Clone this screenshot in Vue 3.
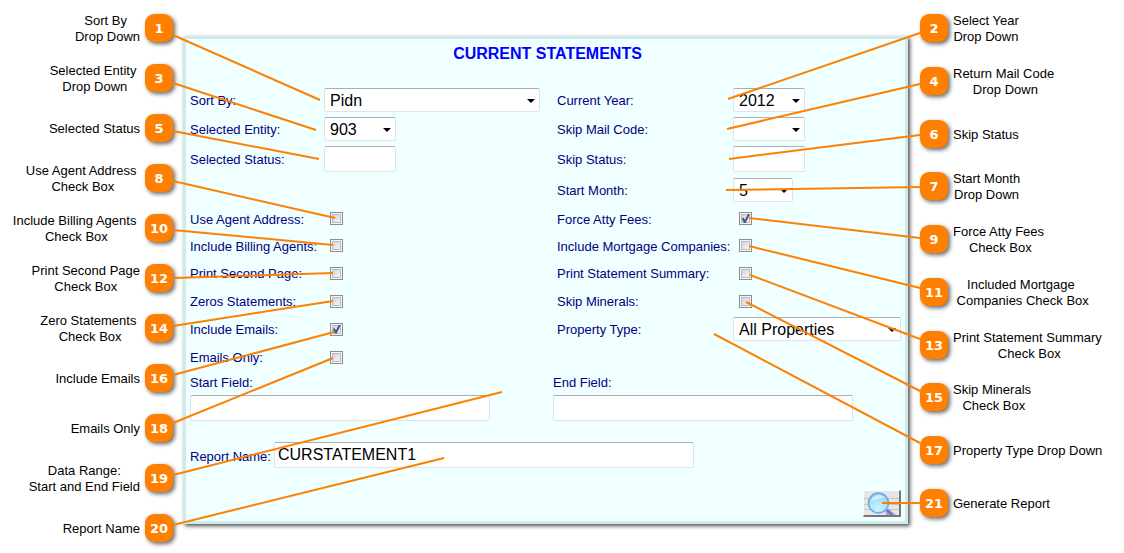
<script setup>
import { reactive } from 'vue'

const leftCallouts = [
  { n: 1, lines: ['Sort By\u00a0', 'Drop Down'] },
  { n: 3, lines: ['Selected Entity\u00a0', 'Drop Down'] },
  { n: 5, lines: ['Selected Status'] },
  { n: 8, lines: ['Use Agent Address\u00a0', 'Check Box'] },
  { n: 10, lines: ['Include Billing Agents\u00a0', 'Check Box'] },
  { n: 12, lines: ['Print Second Page', 'Check Box'] },
  { n: 14, lines: ['Zero Statements\u00a0', 'Check Box'] },
  { n: 16, lines: ['Include Emails'] },
  { n: 18, lines: ['Emails Only'] },
  { n: 19, lines: ['Data Range:', 'Start and End Field'] },
  { n: 20, lines: ['Report Name'] },
]

const rightCallouts = [
  { n: 2, lines: ['Select Year', 'Drop Down'] },
  { n: 4, lines: ['Return Mail Code', '\u00a0Drop Down'] },
  { n: 6, lines: ['Skip Status'] },
  { n: 7, lines: ['Start Month', 'Drop Down'] },
  { n: 9, lines: ['Force Atty Fees', '\u00a0Check Box'] },
  { n: 11, lines: ['Included Mortgage', '\u00a0Companies Check Box'] },
  { n: 13, lines: ['Print Statement Summary', '\u00a0Check Box'] },
  { n: 15, lines: ['Skip Minerals', '\u00a0Check Box'] },
  { n: 17, lines: ['Property Type Drop Down'] },
  { n: 21, lines: ['Generate Report'] },
]

// Leader lines: x1, y1 at the badge, x2, y2 at the field.
const leftLeaders = [
  [173, 35, 320, 100],
  [173, 83, 316, 130],
  [173, 131, 319, 159],
  [173, 181, 335, 218],
  [173, 230, 333, 245],
  [173, 278, 333, 273],
  [173, 326, 333, 301],
  [173, 375, 334, 332],
  [173, 423, 333, 358],
  [173, 475, 502, 392],
  [173, 525, 444, 458],
]

const rightLeaders = [
  [220, 33, 28, 99],
  [220, 84, 27, 129],
  [220, 135, 29, 159],
  [220, 187, 26, 190],
  [220, 238, 49, 218],
  [220, 288, 49, 246],
  [220, 339, 50, 275],
  [220, 391, 46, 302],
  [220, 443, 14, 334],
  [220, 503, 182, 503],
]

const fields = reactive([
  { id: 'sort', side: 'a', row: 1, label: 'Sort By:', type: 'select', size: 'wide', value: 'Pidn' },
  { id: 'year', side: 'b', row: 1, label: 'Current Year:', type: 'select', size: 'short', value: '2012' },
  { id: 'entity', side: 'a', row: 2, label: 'Selected Entity:', type: 'select', size: 'short', value: '903' },
  { id: 'mail', side: 'b', row: 2, label: 'Skip Mail Code:', type: 'select', size: 'short', value: '' },
  { id: 'status', side: 'a', row: 3, label: 'Selected Status:', type: 'text', size: 'short', value: '' },
  { id: 'skip', side: 'b', row: 3, label: 'Skip Status:', type: 'text', size: 'short', value: '' },
  { id: 'month', side: 'b', row: 4, label: 'Start Month:', type: 'select', size: 'tiny', value: '5' },
  { id: 'agent', side: 'a', row: 5, label: 'Use Agent Address:', type: 'check', value: false },
  { id: 'atty', side: 'b', row: 5, label: 'Force Atty Fees:', type: 'check', value: true },
  { id: 'billing', side: 'a', row: 6, label: 'Include Billing Agents:', type: 'check', value: false },
  { id: 'mortgage', side: 'b', row: 6, label: 'Include Mortgage Companies:', type: 'check', value: false },
  { id: 'second', side: 'a', row: 7, label: 'Print Second Page:', type: 'check', value: false },
  { id: 'summary', side: 'b', row: 7, label: 'Print Statement Summary:', type: 'check', value: false },
  { id: 'zeros', side: 'a', row: 8, label: 'Zeros Statements:', type: 'check', value: false },
  { id: 'minerals', side: 'b', row: 8, label: 'Skip Minerals:', type: 'check', value: false },
  { id: 'emails', side: 'a', row: 9, label: 'Include Emails:', type: 'check', value: true },
  { id: 'property', side: 'b', row: 9, label: 'Property Type:', type: 'select', size: 'full', value: 'All Properties' },
  { id: 'only', side: 'a', row: 10, label: 'Emails Only:', type: 'check', value: false },
])

const range = reactive({ start: '', end: '', report: 'CURSTATEMENT1' })
</script>

<template>
  <main class="stage">
    <ul class="callouts left">
      <li v-for="c in leftCallouts" :key="c.n">
        <span class="caption"><span v-for="l in c.lines" :key="l">{{ l }}</span></span>
        <b class="badge">{{ c.n }}</b>
      </li>
    </ul>

    <form class="panel" @submit.prevent>
      <h1>CURRENT STATEMENTS</h1>

      <div class="fields">
        <template v-for="f in fields" :key="f.id">
          <label :for="f.id" :class="['name', f.side]" :style="{ gridRow: f.row }">{{ f.label }}</label>
          <div :class="['control', f.side]" :style="{ gridRow: f.row }">
            <span v-if="f.type === 'select'" :class="['drop', f.size]">
              <select :id="f.id" v-model="f.value">
                <option :value="f.value">{{ f.value }}</option>
              </select>
              <svg class="arrow" viewBox="0 0 8 4" aria-hidden="true"><path d="M0 0h8L4 4z" /></svg>
            </span>
            <input v-else-if="f.type === 'text'" :id="f.id" v-model="f.value" type="text" :class="['box', f.size]">
            <input v-else :id="f.id" v-model="f.value" type="checkbox" class="tick">
          </div>
        </template>
      </div>

      <div class="range">
        <div class="stack">
          <label for="start">Start Field:</label>
          <input id="start" v-model="range.start" type="text" class="box long">
        </div>
        <div class="stack">
          <label for="end">End Field:</label>
          <input id="end" v-model="range.end" type="text" class="box long">
        </div>
      </div>

      <div class="report">
        <label for="report">Report Name:</label>
        <input id="report" v-model="range.report" type="text" class="box report-box">
      </div>

      <button type="submit" class="go" aria-label="Generate Report">
        <svg viewBox="0 0 35 24" aria-hidden="true">
          <defs>
            <radialGradient id="lens" cx="0.45" cy="0.75" r="0.75">
              <stop offset="0" stop-color="#c9f6ff" />
              <stop offset="0.6" stop-color="#a9e0f8" />
              <stop offset="1" stop-color="#8cc6f2" />
            </radialGradient>
          </defs>
          <path d="M0 0h35v24H0z" fill="#e6e6e6" />
          <path d="M0 7.500h35M0 13.500h35M0 18.500h35" stroke="#c6c6c6" />
          <path d="M21 19l4-1 7 6H22z" fill="#a79be0" />
          <path d="M23 19l5 5" stroke="#6a5ab4" stroke-width="1.500" />
          <circle cx="14.500" cy="12" r="10" fill="url(#lens)" stroke="#68abe2" stroke-width="1.500" />
          <path d="M7 10a8 8 0 0 1 14-3q-7 0-14 3z" fill="#e6f8ff" opacity="0.7" />
        </svg>
      </button>
    </form>

    <ul class="callouts right">
      <li v-for="c in rightCallouts" :key="c.n">
        <b class="badge">{{ c.n }}</b>
        <span class="caption"><span v-for="l in c.lines" :key="l">{{ l }}</span></span>
      </li>
    </ul>

    <svg class="leaders from-left" width="520" height="553" aria-hidden="true">
      <line v-for="(p, i) in leftLeaders" :key="i" :x1="p[0]" :y1="p[1]" :x2="p[2]" :y2="p[3]" />
    </svg>
    <svg class="leaders from-right" width="424" height="553" aria-hidden="true">
      <line v-for="(p, i) in rightLeaders" :key="i" :x1="p[0]" :y1="p[1]" :x2="p[2]" :y2="p[3]" />
    </svg>
  </main>
</template>

<style>
body {
  margin: 0;
  background: #fff;
}
</style>

<style scoped>
.stage {
  position: relative;
  display: grid;
  grid-template-columns: 173px minmax(680px, 1fr) 204px;
  font: 13px/16px "Liberation Sans", Arial, sans-serif;
  color: #000;
}

.callouts {
  display: flex;
  flex-direction: column;
  justify-content: space-between;
  margin: 0;
  padding: 14px 0 11px;
  list-style: none;
}
.callouts.right {
  padding-bottom: 36px;
}
.callouts li {
  display: flex;
  align-items: center;
  gap: 5px;
  height: 28px;
  white-space: nowrap;
}
.left li {
  justify-content: flex-end;
}
.left {
  gap: 22px;
}
.caption {
  display: flex;
  flex-direction: column;
  align-items: center;
  padding-top: 2px;
}
.badge {
  flex: none;
  width: 28px;
  height: 28px;
  border-radius: 9px;
  background: #ff8000;
  box-shadow: 2px 2px 4px rgba(0, 0, 0, 0.6);
  color: #fff;
  font: bold 13px/30px "DejaVu Sans", Verdana, sans-serif;
  text-align: center;
}

.panel {
  align-self: start;
  display: flex;
  flex-direction: column;
  margin: 36px 12px 0 10px;
  padding: 4px;
  border: 3px solid #cdebea;
  background: #f0ffff;
  box-shadow: 2px 2px 4px rgba(0, 0, 0, 0.7);
  color: #000080;
}
h1 {
  margin: 0 0 21px 4px;
  color: #00f;
  font-size: 16px;
  line-height: 21px;
  text-align: center;
}

.fields {
  display: grid;
  grid-template-columns: 134px 1fr 176px 168px;
  grid-template-rows: 30px 28px 32px 30px 27px 27px 28px 28px 28px 28px;
  align-items: center;
}
.name {
  padding-top: 2px;
  white-space: nowrap;
}
.name.a { grid-column: 1; }
.control.a { grid-column: 2; }
.name.b { grid-column: 3; }
.control.b { grid-column: 4; }
.control {
  display: flex;
}

.drop {
  position: relative;
  display: flex;
}
.arrow {
  position: absolute;
  right: 5px;
  top: 11px;
  width: 8px;
  height: 4px;
  pointer-events: none;
}
select,
.box {
  box-sizing: border-box;
  width: 100%;
  height: 24px;
  margin: 0;
  padding: 0 5px;
  border: 1px solid #dfe2ea;
  border-top-color: #abadb3;
  border-radius: 2px;
  background: #fff;
  color: #000;
  font: 16px "Liberation Sans", Arial, sans-serif;
  appearance: none;
}
.box {
  height: 26px;
  padding: 0 3px;
}
.wide { width: 216px; }
.short { width: 72px; }
.tiny { width: 60px; }
.full { width: 168px; }
.long { width: 300px; }

.tick {
  display: block;
  box-sizing: border-box;
  width: 13px;
  height: 13px;
  margin: 0 0 0 6px;
  padding: 1px;
  border: 1px solid #8e8f8f;
  background: #f4f4f4;
  appearance: none;
}
.tick::before {
  content: "";
  display: block;
  box-sizing: border-box;
  height: 9px;
  border: 1px solid #bcc0c6;
  background: linear-gradient(135deg, #cdd1d8, #f6f6f6);
}
.tick:checked::after {
  content: "";
  display: block;
  height: 9px;
  margin-top: -9px;
  background: #41568f;
  clip-path: polygon(8% 50%, 30% 42%, 44% 66%, 76% 0, 100% 0, 52% 100%, 34% 100%);
}

.range {
  display: grid;
  grid-template-columns: 1fr 348px;
  margin-top: 4px;
}
.stack {
  display: flex;
  flex-direction: column;
  gap: 4px;
}
.report {
  display: flex;
  align-items: center;
  margin: 21px 0 22px;
}
.report label {
  flex: none;
  width: 84px;
  padding-top: 3px;
}
.report-box {
  width: 420px;
}

.go {
  align-self: flex-end;
  box-sizing: border-box;
  width: 38px;
  height: 27px;
  padding: 0;
  border: 1px solid #fff;
  border-right: 2px solid #777;
  border-bottom: 2px solid #777;
  background: #e6e6e6;
}
.go svg {
  display: block;
  width: 100%;
  height: 100%;
}

.leaders {
  position: absolute;
  top: 0;
  pointer-events: none;
}
.leaders line {
  stroke: #ff8000;
  stroke-width: 2;
}
.from-left { left: 0; }
.from-right { right: 0; }
</style>
